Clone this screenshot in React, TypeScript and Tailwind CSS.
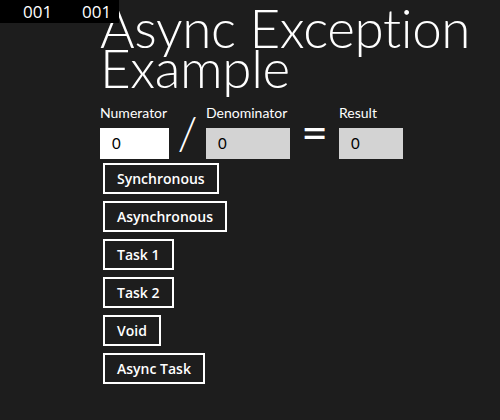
import React from "react";

const buttons = ["Synchronous", "Asynchronous", "Task 1", "Task 2", "Void", "Async Task"];

const lato = { fontFamily: 'Lato, "Open Sans", sans-serif' };

function Field({ label, width, bg }: { label: string; width: string; bg: string }) {
  return (
    <div className={`flex flex-col ${width}`}>
      <label className="mb-[7px] whitespace-nowrap text-[14px] leading-[16px]">{label}</label>
      <div className={`flex h-[31px] items-center pl-[12px] text-[15px] text-black ${bg}`}>0</div>
    </div>
  );
}

export default function App() {
  return (
    <div
      className="relative min-h-[420px] w-[500px] overflow-hidden bg-[#1d1d1d] text-white"
      style={{ fontFamily: '"Open Sans", "Noto Sans", sans-serif' }}
    >
      {/* frame counter overlay */}
      <div className="absolute left-0 top-0 z-10 flex h-[23px] w-[119px] items-center bg-black pl-[23px] text-[17px] leading-none">
        <span className="w-[59px]">001</span>
        <span>001</span>
      </div>

      <div className="pl-[100px] pt-[8px]">
        <h1 className="whitespace-pre text-[53px] font-light leading-[40px] tracking-[-0.4px]" style={lato}>
          {"Async Exception\nExample"}
        </h1>

        <div className="mt-[17px] flex items-end" style={lato}>
          <Field label="Numerator" width="w-[69px]" bg="bg-white" />
          <div className="flex h-[44px] w-[37px] items-start justify-center text-[46px] font-light leading-[36px]">/</div>
          <Field label="Denominator" width="w-[84px]" bg="bg-[#d3d3d3]" />
          <div className="flex h-[44px] w-[49px] items-start justify-center text-[46px] leading-[34px]">=</div>
          <Field label="Result" width="w-[64px]" bg="bg-[#d3d3d3]" />
        </div>

        <div className="ml-[3px] mt-[4px] flex flex-col items-start gap-[7px]">
          {buttons.map((b) => (
            <button
              key={b}
              className="h-[31px] border-2 border-white px-[12px] text-[14px] font-semibold leading-none text-white"
            >
              {b}
            </button>
          ))}
        </div>
      </div>
    </div>
  );
}
